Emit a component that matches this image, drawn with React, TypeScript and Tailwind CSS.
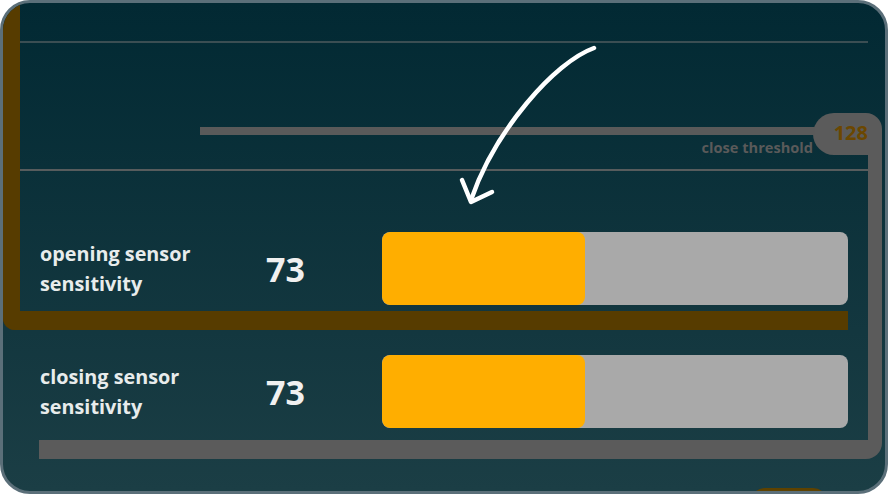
const rows = [
  { label: ["opening sensor", "sensitivity"], value: 73, fill: 203 },
  { label: ["closing sensor", "sensitivity"], value: 73, fill: 203 },
];

const SensorRow = ({ label, value, fill }: { label: string[]; value: number; fill: number }) => {
  return (
    <div className="flex items-center pl-[20px] pr-[20px]">
      <div className="w-[226px] text-[19.8px] font-bold leading-[30px] text-[#e8ecec]">
        {label[0]}
        <br />
        {label[1]}
      </div>
      <div className="w-[116px] text-[34px] font-bold leading-none text-[#f0f0f0]">{value}</div>
      <div className="h-[73px] flex-1 overflow-hidden rounded-[8px] bg-[#a9a9a9]">
        <div className="h-full rounded-[8px] bg-[#ffae00]" style={{ width: fill }} />
      </div>
    </div>
  );
};

const App = () => {
  return (
    <div className="h-[494px] w-[888px] bg-white">
      <div className="relative h-[494px] w-[888px] overflow-hidden rounded-[30px] border-[3px] border-[#5b6f79] bg-linear-to-b from-[#022933] to-[#1b3e45] font-['Open_Sans','Liberation_Sans',sans-serif]">
        {/* brown frame */}
        <div className="absolute left-0 top-[-3px] h-[330px] w-[845px] rounded-bl-[12px] border-b-[19px] border-l-[17px] border-[#573c00]" />

        {/* gray frame + threshold pill */}
        <div className="absolute left-[36px] top-[137px] h-[319px] w-[843px] rounded-br-[16px] border-b-[19px] border-r-[14px] border-[#5b5b5b]" />
        <div className="absolute left-[810px] top-[110px] flex h-[42px] w-[69px] items-center justify-end rounded-l-[21px] rounded-tr-[16px] bg-[#5b5b5b] pb-[2px] pr-[14px] text-[20px] font-bold text-[#6b4700]">
          128
        </div>

        {/* bottom peek */}
        <div className="absolute left-[747px] top-[485px] h-[30px] w-[78px] rounded-full bg-[#5e4200]" />

        <div className="relative mx-[17px]">
          <div className="h-[40px] border-b-2 border-[#3b4e53]" />
          <div className="h-[128px] border-b-2 border-[#575c5d] pt-[84px]">
            <div className="ml-[180px] mr-[53px] h-[8px] bg-[#5a5a5a]" />
            <div className="mt-[3px] pr-[55px] text-right text-[14.6px] font-bold leading-[18px] text-[#5a5a5a]">
              close threshold
            </div>
          </div>

          <div className="mt-[61px] flex flex-col gap-[50px]">
            {rows.map((row) => (
              <SensorRow key={row.label[0]} label={row.label} value={row.value} fill={row.fill} />
            ))}
          </div>
        </div>

        {/* arrow */}
        <svg
          className="pointer-events-none absolute left-[-3px] top-[-3px]"
          width="888"
          height="494"
          viewBox="0 0 888 494"
          fill="none"
        >
          <path d="M594 48 C555 62 495 130 471 200" stroke="white" strokeWidth="4.5" strokeLinecap="round" />
          <path d="M462 180 L471 202 L492 192" stroke="white" strokeWidth="4.5" strokeLinecap="round" strokeLinejoin="round" />
        </svg>
      </div>
    </div>
  );
};

export default App;
